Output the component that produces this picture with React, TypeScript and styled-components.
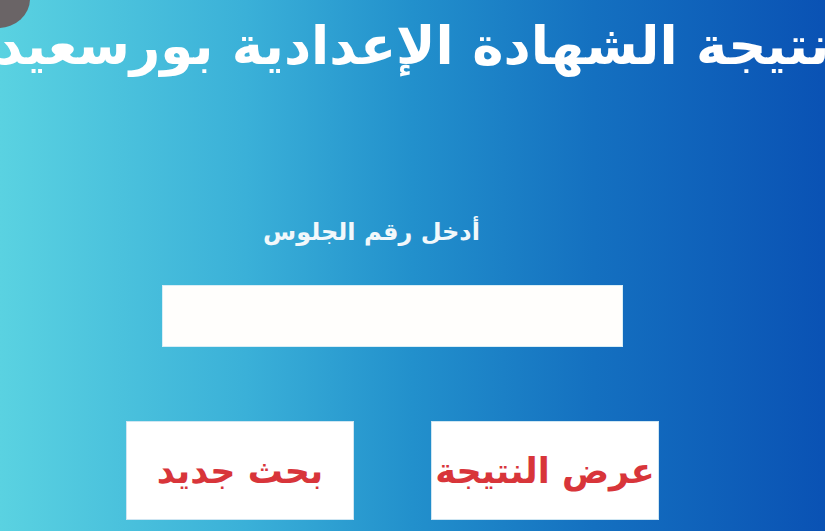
import React from 'react';
import styled, { createGlobalStyle } from 'styled-components';

const Global = createGlobalStyle`
  html, body {
    margin: 0;
    padding: 0;
    overflow: hidden;
  }
  body {
    font-family: "DejaVu Sans", "Noto Sans", sans-serif;
  }
`;

const Page = styled.div`
  position: relative;
  width: 825px;
  height: 531px;
  overflow: hidden;
  background: linear-gradient(90deg, #5ad2e1 0%, #3ab0d8 30%, #2290cc 50%, #1470c0 72%, #0a52b4 100%);
  display: flex;
  flex-direction: column;
  align-items: center;
  direction: rtl;
`;

const Blob = styled.div`
  position: absolute;
  left: -34px;
  top: -30px;
  width: 64px;
  height: 58px;
  border-radius: 50%;
  background: #6a6466;
`;

const Title = styled.h1`
  margin: 6px 0 0;
  white-space: nowrap;
  color: #ffffff;
  font-size: 53px;
  font-weight: 700;
  line-height: 80px;
  text-align: center;
`;

const Form = styled.div`
  display: flex;
  flex-direction: column;
  align-items: center;
  margin-right: 40px;
`;

const Label = styled.div`
  margin-top: 129px;
  margin-right: 42px;
  color: #f2f8fb;
  font-size: 24px;
  font-weight: 700;
  line-height: 34px;
`;

const Field = styled.input`
  margin-top: 36px;
  width: 461px;
  height: 62px;
  box-sizing: border-box;
  border: 1px solid #d8eef6;
  background: #fffefc;
  outline: none;
`;

const Actions = styled.div`
  display: flex;
  gap: 77px;
  margin-top: 74px;
`;

const Action = styled.button`
  width: 228px;
  height: 99px;
  border: 1px solid #cfe6f2;
  background: #ffffff;
  color: #d8353a;
  font-family: "DejaVu Sans", sans-serif;
  font-size: 35px;
  font-weight: 700;
  white-space: nowrap;
  cursor: pointer;
  padding: 0;
`;

export default function App() {
  return (
    <>
      <Global />
      <Page>
        <Blob />
        <Title>نتيجة الشهادة الإعدادية بورسعيد</Title>
        <Form>
          <Label>أدخل رقم الجلوس</Label>
          <Field type="text" />
          <Actions>
            <Action>عرض النتيجة</Action>
            <Action>بحث جديد</Action>
          </Actions>
        </Form>
      </Page>
    </>
  );
}
